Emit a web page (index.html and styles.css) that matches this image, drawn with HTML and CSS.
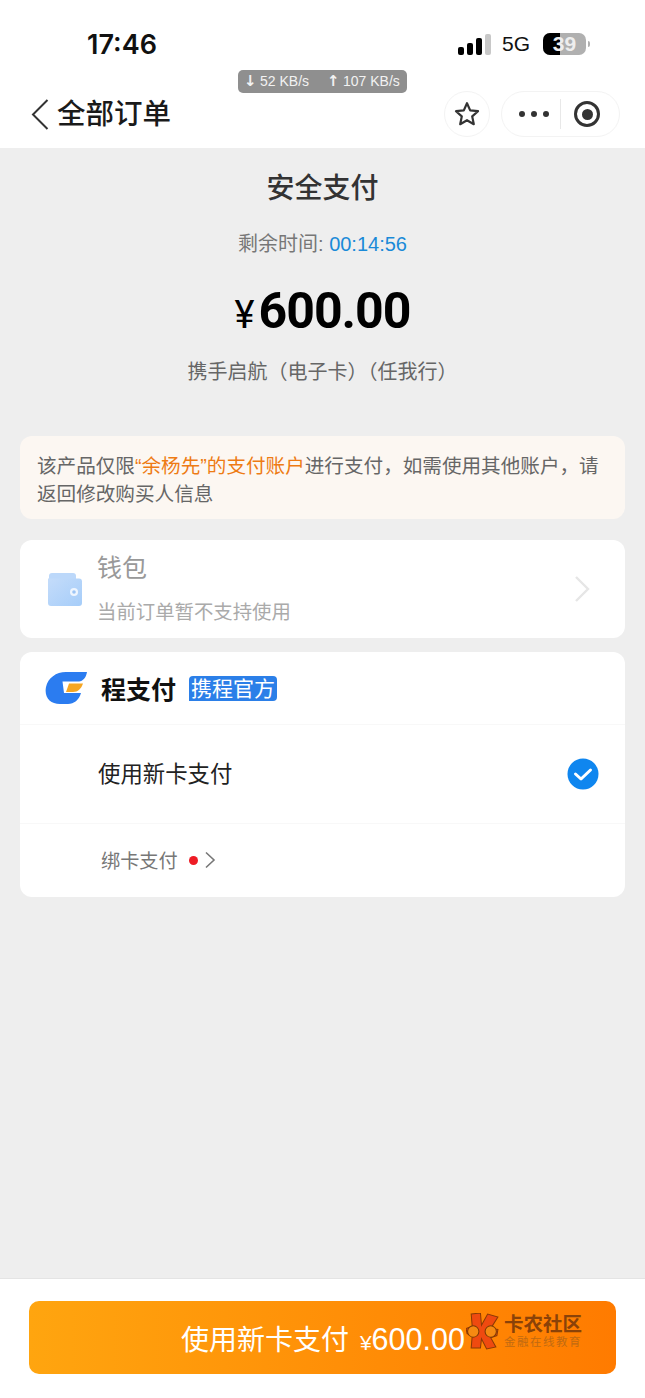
FILE: index.html
```html
<!DOCTYPE html>
<html lang="zh-CN">
<head>
  <meta charset="UTF-8" />
  <meta name="viewport" content="width=device-width, initial-scale=1.0"/>
  <title>安全支付</title>
  <link rel="stylesheet" href="styles.css">
</head>
<body>
  <div class="page">
    <header class="top">
      <div class="status">
        <span class="clock">17:46</span>
        <div class="status-right">
          <div class="signal"><i></i><i></i><i></i><i class="off"></i></div>
          <span class="net">5G</span>
          <div class="battery"><span class="batt-fill"></span><span class="batt-num">39</span></div>
          <span class="batt-tip"></span>
        </div>
      </div>
      <div class="speed">
        <span class="arrow">↓</span><span class="rate">52 KB/s</span>
        <span class="arrow up">↑</span><span class="rate">107 KB/s</span>
      </div>
      <nav class="nav">
        <svg class="back" width="20" height="32" viewBox="0 0 20 32"><path d="M17.5 2 L3 16.5 L17.5 31" fill="none" stroke="#333" stroke-width="2"/></svg>
        <span class="nav-title">全部订单</span>
        <div class="star-btn">
          <svg width="28" height="28" viewBox="0 0 28 28"><path d="M14 3.2 L17.2 10.4 L25 11.2 L19.2 16.4 L20.8 24.2 L14 20.2 L7.2 24.2 L8.8 16.4 L3 11.2 L10.8 10.4 Z" fill="none" stroke="#333" stroke-width="2.2" stroke-linejoin="round"/></svg>
        </div>
        <div class="capsule">
          <div class="dots"><i></i><i></i><i></i></div>
          <span class="cap-line"></span>
          <div class="target"><i></i></div>
        </div>
      </nav>
    </header>

    <main class="main">
      <h1 class="pay-title">安全支付</h1>
      <p class="remain">剩余时间: <span class="time">00:14:56</span></p>
      <p class="amount"><span class="yen">¥</span>600.00</p>
      <p class="product">携手启航（电子卡）（任我行）</p>

      <div class="notice">
        <div>该产品仅限<span class="hl">“余杨先”的支付账户</span>进行支付，如需使用其他账户，请</div>
        <div>返回修改购买人信息</div>
      </div>

      <section class="card wallet">
        <svg class="wallet-icon" width="36" height="36" viewBox="0 0 36 36">
          <defs><linearGradient id="wg" x1="0" y1="0" x2="1" y2="1"><stop offset="0" stop-color="#c4dcfa"/><stop offset="1" stop-color="#a6cdf9"/></linearGradient></defs>
          <path d="M2 5 a3 3 0 0 1 3-3 h21 a3 3 0 0 1 3 3 v3 H2z" fill="#bcd8fa"/>
          <path d="M1 7.5 H32 a3 3 0 0 1 3 3 V32 a3 3 0 0 1-3 3 H4 a3 3 0 0 1-3-3 Z" fill="url(#wg)"/>
          <circle cx="27" cy="21" r="4" fill="#eef5fe"/>
          <circle cx="27" cy="21" r="1.8" fill="#9cc4f4"/>
        </svg>
        <div class="wallet-text">
          <div class="wallet-name">钱包</div>
          <div class="wallet-note">当前订单暂不支持使用</div>
        </div>
        <svg class="wallet-arrow" width="18" height="28" viewBox="0 0 18 28"><path d="M3 2 L15 14 L3 26" fill="none" stroke="#e6e6e6" stroke-width="2.4"/></svg>
      </section>

      <section class="card pay">
        <div class="pay-head">
          <svg class="cp-logo" width="42" height="32" viewBox="0 0 42 32">
            <path d="M42 0 C41 6 38 9 34 9.5 H17.5 L19 21 H36 C34 28 29 32 23 32 H15 C5 32 -1 25 1 15 C3 6 11 0 21 0 Z" fill="#2b7cf0"/>
            <path d="M24 11.5 H38 C36 17 33 20 28 20 H21 Z" fill="#f5a623"/>
          </svg>
          <span class="pay-brand">程支付</span>
          <span class="pay-tag">携程官方</span>
        </div>
        <div class="pay-row">
          <span class="new-card">使用新卡支付</span>
          <svg width="32" height="32" viewBox="0 0 32 32"><circle cx="16" cy="16" r="15.5" fill="#0f86ef"/><path d="M8.5 16 L14 21 L23.5 12" fill="none" stroke="#fff" stroke-width="3" stroke-linecap="round" stroke-linejoin="round"/></svg>
        </div>
        <div class="bind-row">
          <span class="bind-text">绑卡支付</span>
          <span class="red-dot"></span>
          <svg width="12" height="18" viewBox="0 0 12 18"><path d="M2 1.5 L10 9 L2 16.5" fill="none" stroke="#777" stroke-width="1.6"/></svg>
        </div>
      </section>
    </main>

    <footer class="bottom">
      <button class="pay-btn" type="button">使用新卡支付 <span class="btn-yen">¥</span><span class="btn-num">600.00</span></button>
    </footer>

    <div class="mark">
      <svg width="33" height="37" viewBox="0 0 32 36">
        <path d="M5 1 L14 0 L15 12 L21 1 L31 4 L24 15 L31 16 L30 22 L24 24 L29 33 L20 35 L15 25 L14 34 L5 34 L6 22 L1 20 L0 15 L6 13 Z" fill="#ef4a10" stroke="#8a3a05" stroke-width="1"/>
        <circle cx="7" cy="18" r="5.5" fill="#f58a12" stroke="#7a3a05" stroke-width="1"/>
        <circle cx="24" cy="18" r="5.5" fill="#f58a12" stroke="#7a3a05" stroke-width="1"/>
      </svg>
      <div class="mark-text">
        <div class="mark-name">卡农社区</div>
        <div class="mark-sub">金融在线教育</div>
      </div>
    </div>
  </div>
</body>
</html>
```

FILE: styles.css
```css
* {
  box-sizing: border-box;
}

html, body {
  margin: 0;
  padding: 0;
}

body {
  font-family: "Liberation Sans", "Noto Sans CJK SC", sans-serif;
  background: #eeeeee;
  color: #111;
}

.page {
  position: relative;
  width: 645px;
  height: 1398px;
  display: flex;
  flex-direction: column;
  overflow: hidden;
}

.top {
  position: relative;
  height: 148px;
  background: #fff;
  flex: none;
}

.status {
  height: 90px;
  padding: 28px 55px 0 87px;
  display: flex;
  justify-content: space-between;
}

.clock {
  font-family: Inter, "Liberation Sans", sans-serif;
  font-size: 27px;
  font-weight: 600;
  line-height: 34px;
}

.status-right {
  display: flex;
  align-items: center;
  height: 32px;
}

.signal {
  display: flex;
  align-items: flex-end;
  gap: 3px;
  height: 21px;
  margin-right: 11px;
}

.signal i {
  width: 6px;
  background: #000;
  border-radius: 2px;
  height: 8px;
}

.signal i:nth-child(2) { height: 12px; }
.signal i:nth-child(3) { height: 17px; }
.signal i.off { height: 21px; background: #c8c8c8; }

.net {
  font-size: 21px;
  margin-right: 13px;
}

.battery {
  position: relative;
  width: 43px;
  height: 22px;
  background: #b0b0b0;
  border-radius: 7px;
  overflow: hidden;
  text-align: center;
}

.batt-fill {
  position: absolute;
  left: 0;
  top: 0;
  bottom: 0;
  width: 17px;
  background: #000;
}

.batt-num {
  position: relative;
  font-size: 21px;
  font-weight: 700;
  line-height: 22px;
  color: #eee;
}

.batt-tip {
  width: 2px;
  height: 6px;
  margin-left: 2px;
  background: #b0b0b0;
  border-radius: 0 2px 2px 0;
}

.speed {
  position: absolute;
  left: 238px;
  top: 70px;
  width: 169px;
  height: 23px;
  padding: 0 0 0 6px;
  background: #8f8f8f;
  border-radius: 5px;
  color: #f2f2f2;
  font-size: 14px;
  line-height: 23px;
  display: flex;
  white-space: nowrap;
}

.arrow {
  font-family: "DejaVu Sans", sans-serif;
  font-size: 15px;
  font-weight: 700;
  width: 16px;
}

.arrow.up {
  margin-left: 18px;
}

.nav {
  display: flex;
  align-items: center;
  height: 48px;
  padding-left: 30px;
}

.back {
  margin-right: 7px;
}

.nav-title {
  font-size: 28.5px;
  font-weight: 500;
  line-height: 44px;
  height: 44px;
  color: #1a1a1a;
  flex: 1;
}

.star-btn {
  width: 46px;
  height: 46px;
  border: 1px solid #f3f3f3;
  border-radius: 50%;
  display: flex;
  align-items: center;
  justify-content: center;
  margin-right: 11px;
}

.capsule {
  width: 119px;
  height: 46px;
  border: 1px solid #f3f3f3;
  border-radius: 23px;
  display: flex;
  align-items: center;
  margin-right: 25px;
  padding-left: 17px;
}

.dots {
  display: flex;
  gap: 6px;
}

.dots i {
  width: 6px;
  height: 6px;
  border-radius: 50%;
  background: #333;
}

.cap-line {
  width: 1px;
  height: 30px;
  background: #e8e8e8;
  margin: 0 13px 0 11px;
}

.target {
  width: 26px;
  height: 26px;
  border: 3px solid #333;
  border-radius: 50%;
  display: flex;
  align-items: center;
  justify-content: center;
}

.target i {
  width: 11px;
  height: 11px;
  background: #333;
  border-radius: 50%;
}

.main {
  flex: 1;
  padding: 0 20px;
}

.pay-title {
  margin: 24px 0 0;
  text-align: center;
  font-size: 28px;
  line-height: 34px;
  font-weight: 500;
  color: #333;
}

.remain {
  margin: 25px 0 0;
  text-align: center;
  font-size: 20px;
  line-height: 26px;
  color: #777;
}

.time {
  color: #1a8ad8;
}

.amount {
  margin: 24px 0 0;
  text-align: center;
  font-family: Roboto, sans-serif;
  font-size: 50px;
  line-height: 60px;
  font-weight: 700;
  letter-spacing: -1px;
  color: #000;
}

.yen {
  font-size: 38px;
  font-weight: 400;
  margin-right: 5px;
}

.product {
  margin: 13px 0 0;
  text-align: center;
  font-size: 20px;
  line-height: 28px;
  color: #666;
}

.notice {
  margin-top: 50px;
  height: 83px;
  padding: 16px 17px 0;
  background: #fcf7f2;
  border-radius: 12px;
  font-size: 19.6px;
  line-height: 28px;
  color: #666;
  white-space: nowrap;
}

.hl {
  color: #ee7b14;
}

.card {
  background: #fff;
  border-radius: 12px;
}

.wallet {
  margin-top: 21px;
  height: 98px;
  display: flex;
  align-items: center;
  padding: 0 34px 0 27px;
}

.wallet-icon {
  flex: none;
  margin-right: 14px;
}

.wallet-text {
  flex: 1;
  margin-top: -3px;
}

.wallet-name {
  font-size: 25px;
  line-height: 34px;
  color: #999;
}

.wallet-note {
  margin-top: 14px;
  font-size: 19.4px;
  line-height: 26px;
  color: #aaa;
}

.pay {
  margin-top: 14px;
  height: 245px;
}

.pay-head {
  height: 73px;
  padding-left: 25px;
  display: flex;
  align-items: center;
  border-bottom: 1px solid #f8f8f8;
}

.cp-logo {
  margin-right: 14px;
}

.pay-brand {
  font-size: 25px;
  font-weight: 700;
  color: #111;
  margin-right: 13px;
}

.pay-tag {
  width: 88px;
  height: 25px;
  background: #2b7fe8;
  border-radius: 4px 4px 4px 0;
  color: #fff;
  font-size: 21px;
  line-height: 25px;
  text-align: center;
  white-space: nowrap;
}

.pay-row {
  height: 99px;
  padding: 0 26px 0 78px;
  display: flex;
  align-items: center;
  justify-content: space-between;
  border-bottom: 1px solid #f8f8f8;
}

.new-card {
  font-size: 22.4px;
  color: #222;
  margin-bottom: 4px;
}

.bind-row {
  height: 72px;
  padding-left: 81px;
  display: flex;
  align-items: center;
}

.bind-text {
  font-size: 19.2px;
  color: #777;
  margin-right: 11px;
}

.red-dot {
  width: 9px;
  height: 9px;
  background: #ee1c25;
  border-radius: 50%;
  margin-right: 6px;
}

.bottom {
  flex: none;
  height: 120px;
  padding: 22px 29px 0;
  background: #fff;
  border-top: 1px solid #e4e4e4;
}

.pay-btn {
  display: block;
  width: 587px;
  height: 73px;
  border: none;
  border-radius: 10px;
  padding: 0 0 0 1px;
  background: linear-gradient(90deg, #ffa50f, #ff7b00);
  color: #fff;
  font-family: inherit;
  font-size: 28px;
  text-align: center;
}

.btn-yen {
  font-size: 21px;
  margin-left: 3px;
}

.btn-num {
  font-size: 30.5px;
}

.mark {
  position: absolute;
  left: 466px;
  top: 1313px;
  display: flex;
  align-items: center;
  gap: 5px;
}

.mark-name {
  font-size: 19.5px;
  line-height: 20px;
  font-weight: 700;
  color: #8a4208;
}

.mark-sub {
  margin-top: 2px;
  font-size: 11.5px;
  line-height: 13px;
  letter-spacing: 1.5px;
  color: #c06a12;
}
```
